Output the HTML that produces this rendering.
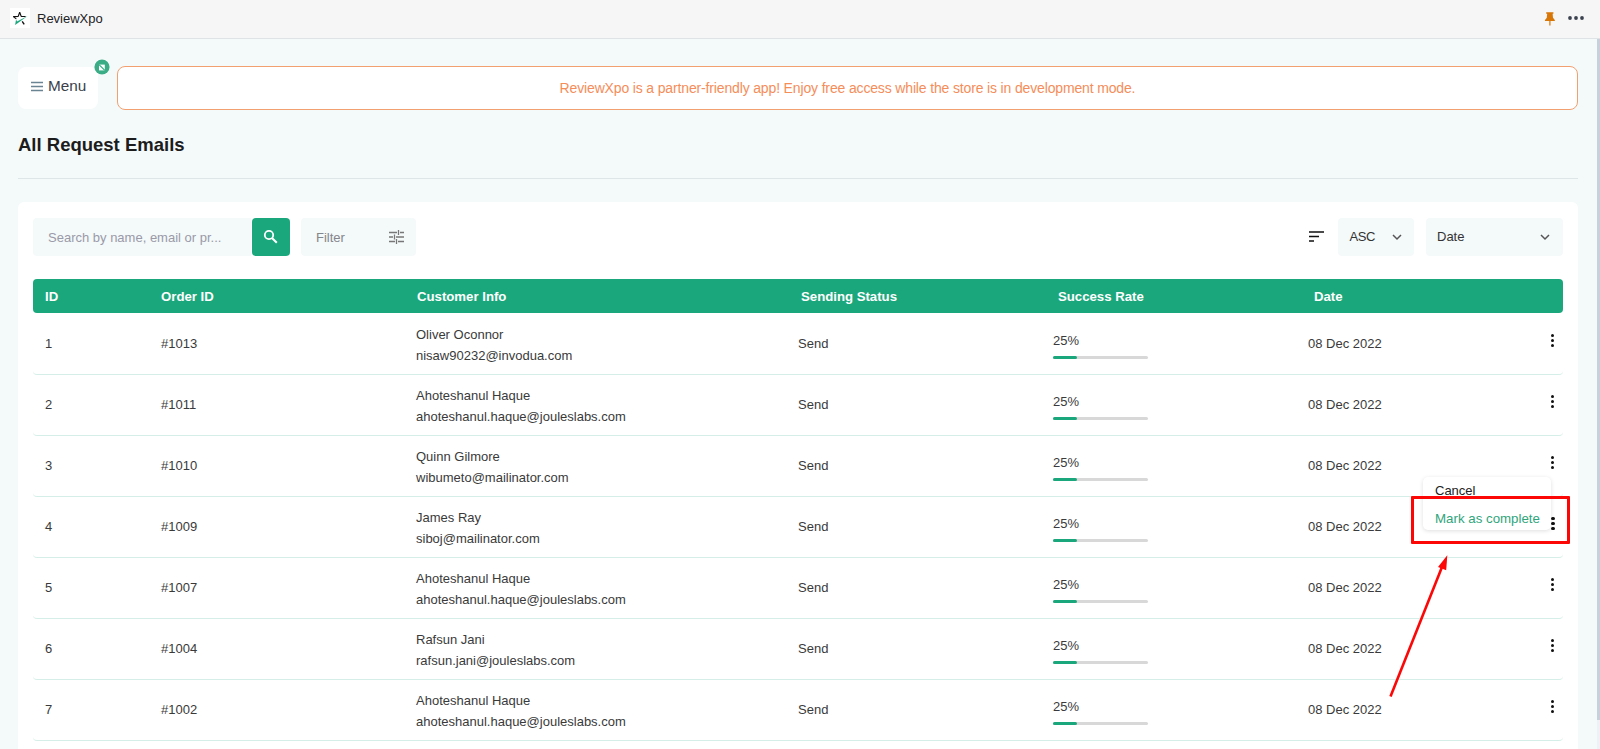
<!DOCTYPE html>
<html lang="en">
<head>
<meta charset="utf-8">
<title>ReviewXpo</title>
<style>
*{box-sizing:border-box;margin:0;padding:0}
html,body{width:1600px;height:749px;overflow:hidden}
body{font-family:"Liberation Sans",sans-serif;background:#f4f9fa;color:#333;position:relative}
.abs{position:absolute}
.topbar{left:0;top:0;width:1600px;height:39px;background:#f6f6f7;border-bottom:1px solid #e0e3e6}
.topbar .name{left:37px;top:11px;font-size:13px;color:#222;line-height:16px}
.logo{left:10px;top:8px;width:20px;height:20px;background:#fff}
.scroll{left:1597px;top:39px;width:3px;height:681px;background:#c7d1de}
.track{left:1597px;top:39px;width:3px;height:710px;background:#eef2f6}
.menu{left:18px;top:67px;width:80px;height:42px;background:#fff;border-radius:8px}
.menu span{left:30px;top:10px;font-size:15.300px;color:#3a3f4a;line-height:18px}
.badge{left:93.100px;top:58.100px;width:18px;height:18px}
.banner{left:117px;top:66px;width:1461px;height:44px;background:#fff;border:1px solid #f3a070;border-radius:8px;text-align:center;font-size:14px;letter-spacing:-0.150px;line-height:42px;color:#f58d5a;padding-right:0}
h1{left:18px;top:134px;font-size:18.500px;font-weight:700;color:#1c1c1c;line-height:22px}
.hr{left:18px;top:178px;width:1560px;height:1px;background:#dfe6e8}
.card{left:18px;top:202px;width:1560px;height:560px;background:#fff;border-radius:6px}
.inp{background:#f4f9fa;border-radius:4px;height:38px;top:218px;font-size:13px;line-height:38px;color:#9a9aa8}
.btn{left:252px;top:218px;width:38px;height:38px;background:#1ba77c;border-radius:4px}
.thead{left:33px;top:279px;width:1530px;height:34px;background:#1ba77c;border-radius:4px}
.th{top:0;font-size:13.200px;font-weight:700;color:#fff;line-height:35px;white-space:nowrap}
.row{left:33px;width:1530px;height:61px;border-bottom:1px solid #d5efe8;border-radius:0 0 4px 4px}
.td{font-size:13px;color:#3a3a3a;line-height:16px;white-space:nowrap}
.bar{left:1020px;top:42px;width:95px;height:3px;background:#d8d8d8;border-radius:2px}
.bar i{display:block;width:24px;height:3px;background:#1ba77c;border-radius:2px}
.dots{left:1518px;top:20px;width:4px;height:14px}
.dots i{display:block;width:3.400px;height:3.400px;border-radius:50%;background:#111;margin-bottom:1.600px}
.pop{left:1423px;top:477px;width:128px;height:53px;background:#fff;border-radius:5px;box-shadow:0 1px 4px rgba(0,0,0,.13)}
.red{left:1411px;top:496px;width:159px;height:48px;border:3px solid #fd0606;border-radius:1px}
</style>
</head>
<body>
<div class="abs topbar">
  <div class="abs logo"><svg width="20" height="20" viewBox="0 0 20 20"><path d="M6.300 10.900L3.300 8.600l4.900-.200 1.500-4.200 1.500 4.200 4.400.100" fill="none" stroke="#111" stroke-width="1.150" stroke-linejoin="bevel"/><path d="M12.200 13.400l2 3" stroke="#111" stroke-width="1.400"/><path d="M6.100 11.200L5.100 17 17.600 7.900 7 13.600z" fill="#1ba77c"/></svg></div>
  <div class="abs name">ReviewXpo</div>
  <svg class="abs" style="left:1543px;top:10.500px" width="14" height="16" viewBox="0 0 14 16"><path d="M3.200 1.300h7.200v1.500h-.800l.400 4 1.800 2.200c.200.300.100 1-.400 1h-3.900v4.600h-1.200v-4.600h-3.900c-.500 0-.600-.700-.400-1l1.800-2.200.400-4h-1z" fill="#d87607"/></svg>
  <svg class="abs" style="left:1567px;top:15px" width="18" height="6" viewBox="0 0 18 6"><circle cx="3" cy="3" r="1.900" fill="#3c4350"/><circle cx="9" cy="3" r="1.900" fill="#3c4350"/><circle cx="15" cy="3" r="1.900" fill="#3c4350"/></svg>
</div>
<div class="abs track"></div>
<div class="abs scroll"></div>

<div class="abs menu">
  <svg class="abs" style="left:13px;top:14px" width="13" height="11" viewBox="0 0 13 11"><path d="M0 1.500h12M0 5.500h12M0 9.500h12" stroke="#6b8493" stroke-width="1.700"/></svg>
  <span class="abs">Menu</span>
</div>
<div class="abs badge"><svg width="18" height="18" viewBox="0 0 18 18"><circle cx="9" cy="9" r="8.300" fill="#fff" opacity=".7"/><circle cx="9" cy="9" r="7.600" fill="#3aad86"/><rect x="6" y="6.600" width="5.800" height="5.800" fill="#fff"/><path d="M6 6.600l5.800 5.800" stroke="#3aad86" stroke-width="1.300"/></svg></div>
<div class="abs banner">ReviewXpo is a partner-friendly app! Enjoy free access while the store is in development mode.</div>
<h1 class="abs">All Request Emails</h1>
<div class="abs hr"></div>

<div class="abs card"></div>
<div class="abs inp" style="left:33px;width:218px;padding-left:15px;line-height:40px;border-radius:4px 0 0 4px">Search by name, email or pr...</div>
<div class="abs btn"><svg class="abs" style="left:11px;top:11px" width="16" height="16" viewBox="0 0 16 16"><circle cx="6" cy="6" r="4.200" fill="none" stroke="#fff" stroke-width="1.800"/><path d="M9.200 9.200l4.600 4.600" stroke="#fff" stroke-width="2"/></svg></div>
<div class="abs inp" style="left:301px;width:115px;padding-left:15px;color:#85858c;line-height:40px">Filter
  <svg class="abs" style="left:88px;top:12px" width="15" height="14" viewBox="0 0 15 14"><path d="M0 2.500h8M11 2.500h4M0 7h4M7 7h8M0 11.500h6M9 11.500h6M9.500 0v5M5.500 4.500v5M7.500 9v5" stroke="#777" stroke-width="1.300" fill="none"/></svg>
</div>
<svg class="abs" style="left:1309px;top:231px" width="15" height="11" viewBox="0 0 15 11"><path d="M0 1h15M0 5.500h10M0 10h5" stroke="#111" stroke-width="1.700"/></svg>
<div class="abs inp" style="left:1338px;width:76px;padding-left:11.500px;color:#333;letter-spacing:-0.400px">ASC
  <svg class="abs" style="left:54px;top:16px" width="10" height="7" viewBox="0 0 10 7"><path d="M1 1l4 4 4-4" fill="none" stroke="#555" stroke-width="1.500"/></svg>
</div>
<div class="abs inp" style="left:1426px;width:137px;padding-left:11px;color:#333">Date
  <svg class="abs" style="left:114px;top:16px" width="10" height="7" viewBox="0 0 10 7"><path d="M1 1l4 4 4-4" fill="none" stroke="#555" stroke-width="1.500"/></svg>
</div>

<div class="abs thead">
  <div class="abs th" style="left:12px">ID</div>
  <div class="abs th" style="left:128px">Order ID</div>
  <div class="abs th" style="left:384px">Customer Info</div>
  <div class="abs th" style="left:768px">Sending Status</div>
  <div class="abs th" style="left:1025px">Success Rate</div>
  <div class="abs th" style="left:1281px">Date</div>
</div>
<div class="abs row" style="top:314px">
  <div class="abs td" style="left:12px;top:22px">1</div>
  <div class="abs td" style="left:128px;top:22px">#1013</div>
  <div class="abs td" style="left:383px;top:13px">Oliver Oconnor</div>
  <div class="abs td" style="left:383px;top:34px">nisaw90232@invodua.com</div>
  <div class="abs td" style="left:765px;top:22px">Send</div>
  <div class="abs td" style="left:1020px;top:19px">25%</div>
  <div class="abs bar"><i></i></div>
  <div class="abs td" style="left:1275px;top:22px">08 Dec 2022</div>
  <div class="abs dots"><i></i><i></i><i></i></div>
</div>
<div class="abs row" style="top:375px">
  <div class="abs td" style="left:12px;top:22px">2</div>
  <div class="abs td" style="left:128px;top:22px">#1011</div>
  <div class="abs td" style="left:383px;top:13px">Ahoteshanul Haque</div>
  <div class="abs td" style="left:383px;top:34px">ahoteshanul.haque@jouleslabs.com</div>
  <div class="abs td" style="left:765px;top:22px">Send</div>
  <div class="abs td" style="left:1020px;top:19px">25%</div>
  <div class="abs bar"><i></i></div>
  <div class="abs td" style="left:1275px;top:22px">08 Dec 2022</div>
  <div class="abs dots"><i></i><i></i><i></i></div>
</div>
<div class="abs row" style="top:436px">
  <div class="abs td" style="left:12px;top:22px">3</div>
  <div class="abs td" style="left:128px;top:22px">#1010</div>
  <div class="abs td" style="left:383px;top:13px">Quinn Gilmore</div>
  <div class="abs td" style="left:383px;top:34px">wibumeto@mailinator.com</div>
  <div class="abs td" style="left:765px;top:22px">Send</div>
  <div class="abs td" style="left:1020px;top:19px">25%</div>
  <div class="abs bar"><i></i></div>
  <div class="abs td" style="left:1275px;top:22px">08 Dec 2022</div>
  <div class="abs dots"><i></i><i></i><i></i></div>
</div>
<div class="abs row" style="top:497px">
  <div class="abs td" style="left:12px;top:22px">4</div>
  <div class="abs td" style="left:128px;top:22px">#1009</div>
  <div class="abs td" style="left:383px;top:13px">James Ray</div>
  <div class="abs td" style="left:383px;top:34px">siboj@mailinator.com</div>
  <div class="abs td" style="left:765px;top:22px">Send</div>
  <div class="abs td" style="left:1020px;top:19px">25%</div>
  <div class="abs bar"><i></i></div>
  <div class="abs td" style="left:1275px;top:22px">08 Dec 2022</div>
  <div class="abs dots"><i></i><i></i><i></i></div>
</div>
<div class="abs row" style="top:558px">
  <div class="abs td" style="left:12px;top:22px">5</div>
  <div class="abs td" style="left:128px;top:22px">#1007</div>
  <div class="abs td" style="left:383px;top:13px">Ahoteshanul Haque</div>
  <div class="abs td" style="left:383px;top:34px">ahoteshanul.haque@jouleslabs.com</div>
  <div class="abs td" style="left:765px;top:22px">Send</div>
  <div class="abs td" style="left:1020px;top:19px">25%</div>
  <div class="abs bar"><i></i></div>
  <div class="abs td" style="left:1275px;top:22px">08 Dec 2022</div>
  <div class="abs dots"><i></i><i></i><i></i></div>
</div>
<div class="abs row" style="top:619px">
  <div class="abs td" style="left:12px;top:22px">6</div>
  <div class="abs td" style="left:128px;top:22px">#1004</div>
  <div class="abs td" style="left:383px;top:13px">Rafsun Jani</div>
  <div class="abs td" style="left:383px;top:34px">rafsun.jani@jouleslabs.com</div>
  <div class="abs td" style="left:765px;top:22px">Send</div>
  <div class="abs td" style="left:1020px;top:19px">25%</div>
  <div class="abs bar"><i></i></div>
  <div class="abs td" style="left:1275px;top:22px">08 Dec 2022</div>
  <div class="abs dots"><i></i><i></i><i></i></div>
</div>
<div class="abs row" style="top:680px">
  <div class="abs td" style="left:12px;top:22px">7</div>
  <div class="abs td" style="left:128px;top:22px">#1002</div>
  <div class="abs td" style="left:383px;top:13px">Ahoteshanul Haque</div>
  <div class="abs td" style="left:383px;top:34px">ahoteshanul.haque@jouleslabs.com</div>
  <div class="abs td" style="left:765px;top:22px">Send</div>
  <div class="abs td" style="left:1020px;top:19px">25%</div>
  <div class="abs bar"><i></i></div>
  <div class="abs td" style="left:1275px;top:22px">08 Dec 2022</div>
  <div class="abs dots"><i></i><i></i><i></i></div>
</div>
<div class="abs row" style="top:741px">
  <div class="abs td" style="left:12px;top:22px">8</div>
  <div class="abs td" style="left:128px;top:22px">#1001</div>
  <div class="abs td" style="left:383px;top:13px">Ahoteshanul Haque</div>
  <div class="abs td" style="left:383px;top:34px">ahoteshanul.haque@jouleslabs.com</div>
  <div class="abs td" style="left:765px;top:22px">Send</div>
  <div class="abs td" style="left:1020px;top:19px">25%</div>
  <div class="abs bar"><i></i></div>
  <div class="abs td" style="left:1275px;top:22px">08 Dec 2022</div>
  <div class="abs dots"><i></i><i></i><i></i></div>
</div>
<div class="abs pop">
  <div class="abs td" style="left:12px;top:6px;color:#222">Cancel</div>
  <div class="abs td" style="left:12px;top:34px;color:#2fa57c;font-size:13.300px">Mark as complete</div>
</div>
<div class="abs dots" style="left:1551.500px;top:517px"><i></i><i></i><i></i></div>
<div class="abs red"></div>
<svg class="abs" style="left:1380px;top:550px" width="80" height="150" viewBox="0 0 80 150"><path d="M10.500 146.500L62 17" stroke="#fd0606" stroke-width="2.600" fill="none"/><path d="M67.300 5.200l-9.300 11.800 8.200 3.200z" fill="#fd0606"/></svg>
</body>
</html>
